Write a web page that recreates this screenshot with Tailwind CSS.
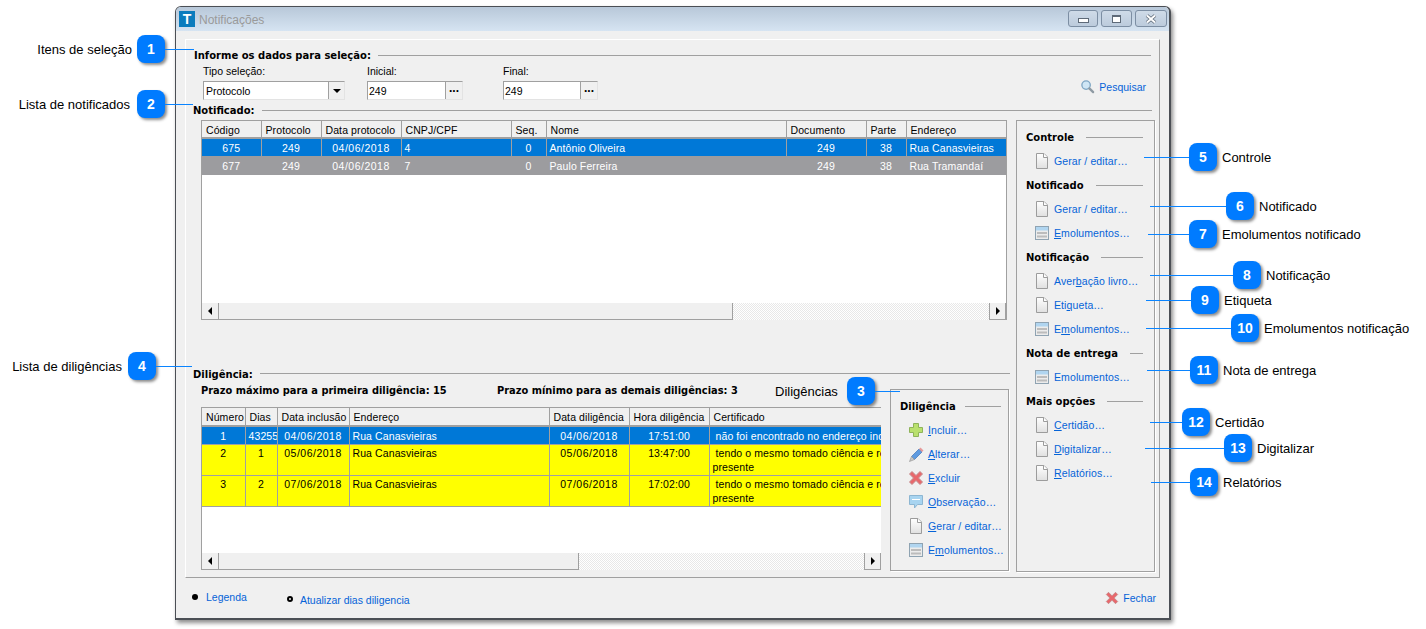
<!DOCTYPE html>
<html lang="pt-BR">
<head>
<meta charset="UTF-8">
<title>Notificações</title>
<script src="https://cdn.jsdelivr.net/npm/@tailwindcss/browser@4"></script>
</head>
<body class="relative w-[1426px] h-[629px] overflow-hidden bg-white pt-[6px] pl-[175px] font-['Liberation_Sans',sans-serif] text-[10.5px] leading-[14px] text-black">

<!-- shared icons -->
<svg class="absolute w-0 h-0">
  <defs><linearGradient id="g-doc" x1="0" y1="0" x2="0" y2="1"><stop offset="0" stop-color="#fff"/><stop offset="1" stop-color="#e0e0e0"/></linearGradient></defs>
  <symbol id="i-doc" viewBox="0 0 16 16"><path d="M2.5 .5h7.5l3.5 3.5v11.5h-11z" fill="url(#g-doc)" stroke="#9c9c9c"/><path d="M9.5 .5v4h4" fill="#fff" stroke="#9c9c9c"/></symbol>
  <symbol id="i-emol" viewBox="0 0 16 16"><rect x="1.5" y="1.5" width="13" height="13" fill="#ececec" stroke="#8fa3b2"/><rect x="2" y="2" width="12" height="3.5" fill="#b0d5f0"/><path d="M3 8h10M3 11.5h10" stroke="#bcbcbc" stroke-width="2"/></symbol>
  <symbol id="i-plus" viewBox="0 0 16 16"><path d="M5.5 1.5h5v4h4v5h-4v4h-5v-4h-4v-5h4z" fill="#b9e06e" stroke="#8fb35a"/></symbol>
  <symbol id="i-pencil" viewBox="0 0 16 16"><path d="M3.5 10.5l7.5-7.5 3 3-7.500 7.500z" fill="#5f9be0" stroke="#4d7fbd" stroke-width=".8"/><path d="M11 3l1.500-1.500 3 3-1.500 1.500z" fill="#e69a9a"/><path d="M3.500 10.500l3 3-5 2z" fill="#c9c9c9" stroke="#8d8d8d" stroke-width=".6"/></symbol>
  <symbol id="i-x" viewBox="0 0 16 16"><path d="M1.500 4l2.500-2.500 4 4 4-4 2.500 2.500-4 4 4 4-2.500 2.500-4-4-4 4-2.500-2.500 4-4z" fill="#e8686c" stroke="#c48a8c"/></symbol>
  <symbol id="i-bubble" viewBox="0 0 16 16"><path d="M1.500 1.500h13v9h-5l-3 3.500v-3.500h-5z" fill="#a8d4f0" stroke="#8db6d2"/><path d="M4 5.500h8" stroke="#fff"/></symbol>
  <symbol id="i-lens" viewBox="0 0 16 16"><circle cx="6.500" cy="6.500" r="4.500" fill="#cfe6f5" stroke="#7ea6c4" stroke-width="1.400"/><path d="M10 10l4 4" stroke="#8e9aa3" stroke-width="2.400" stroke-linecap="round"/></symbol>
</svg>

<!-- window -->
<div class="w-[996px] h-[614px] bg-[#f0f0f0] border-l border-t border-[#4b4f55] border-r-2 border-b-2 rounded-t-[6px] shadow-[2px_3px_4px_rgba(0,0,0,0.45)] flex flex-col">
  <div class="h-[24px] shrink-0 rounded-t-[5px] bg-linear-to-b from-[#b8c8d9] to-[#d6e4f2] flex items-center pl-[3px] pr-[2px]">
    <div class="w-[16px] h-[16px] bg-[#0b7cbd] text-white font-bold text-[14px] leading-[16px] text-center">T</div>
    <span class="ml-[4px] mt-[2px] text-[12px] text-[#9a9a9a]">Notificações</span>
    <div class="ml-auto flex gap-[3px] -mt-[1px]">
      <div class="w-[30px] h-[17px] border border-[#7c8ea3] rounded-[3px] bg-linear-to-b from-[#cfdbe8] to-[#bccbdc] flex items-center justify-center"><div class="w-[11px] h-[5px] mt-[4px] bg-white border border-[#5e6a78]"></div></div>
      <div class="w-[31px] h-[17px] border border-[#7c8ea3] rounded-[3px] bg-linear-to-b from-[#cfdbe8] to-[#bccbdc] flex items-center justify-center"><div class="w-[9px] h-[8px] border border-t-2 border-[#5e6a78] bg-white"></div></div>
      <div class="w-[32px] h-[17px] border border-[#7c8ea3] rounded-[3px] bg-linear-to-b from-[#cfdbe8] to-[#bccbdc] flex items-center justify-center">
        <svg class="w-[12px] h-[10px]" viewBox="0 0 12 10"><path d="M2 1.500l8 7M10 1.500l-8 7" stroke="#5e6a78" stroke-width="3.600"/><path d="M2 1.500l8 7M10 1.500l-8 7" stroke="#fff" stroke-width="2"/></svg>
      </div>
    </div>
  </div>

  <div class="ml-[9px] mt-[8px] w-[975px] h-[539px] shrink-0 border-t border-l border-white border-r border-b border-r-[#a0a0a0] border-b-[#a0a0a0]">
    <!-- selection -->
    <div class="mt-[8px] pl-[8px] pr-[8px] h-[14px] flex items-center gap-[7px] font-['DejaVu_Sans',sans-serif] font-bold text-[10px]">
      <span class="mt-[2px]">Informe os dados para seleção:</span><div class="flex-1 h-px bg-[#a0a0a0]"></div>
    </div>
    <div class="flex pl-[17px] pr-[13px] mt-[2px]">
      <div class="w-[142px]">
        <div class="h-[14px] mb-[3px]">Tipo seleção:</div>
        <div class="h-[19px] bg-white border border-[#a0a0a0] border-b-[#e3e3e3] border-r-[#e3e3e3] flex items-center pl-[2px]">
          <span>Protocolo</span>
          <div class="ml-auto w-[16px] h-[17px] bg-[#f0f0f0] border-l border-[#a0a0a0] flex items-center justify-center"><div class="border-x-[4px] border-x-transparent border-t-[4px] border-t-black"></div></div>
        </div>
      </div>
      <div class="w-[96px] ml-[22px]">
        <div class="h-[14px] mb-[3px]">Inicial:</div>
        <div class="h-[19px] bg-white border border-[#a0a0a0] border-b-[#e3e3e3] border-r-[#e3e3e3] flex items-center pl-[1px]">
          <span>249</span>
          <div class="ml-auto w-[17px] h-[17px] bg-[#f0f0f0] border-l border-[#a0a0a0] font-bold text-[12px] text-center leading-[12px]">...</div>
        </div>
      </div>
      <div class="w-[95px] ml-[40px]">
        <div class="h-[14px] mb-[3px]">Final:</div>
        <div class="h-[19px] bg-white border border-[#a0a0a0] border-b-[#e3e3e3] border-r-[#e3e3e3] flex items-center pl-[1px]">
          <span>249</span>
          <div class="ml-auto w-[17px] h-[17px] bg-[#f0f0f0] border-l border-[#a0a0a0] font-bold text-[12px] text-center leading-[12px]">...</div>
        </div>
      </div>
      <div class="ml-auto self-end mb-[6px] flex items-center gap-[4px] text-[#0563d8]">
        <svg class="w-[15px] h-[15px]"><use href="#i-lens"/></svg><span>Pesquisar</span>
      </div>
    </div>

    <!-- notificado -->
    <div class="mt-[3px] pl-[7px] pr-[7px] h-[14px] flex items-center gap-[7px] font-['DejaVu_Sans',sans-serif] font-bold text-[10px]">
      <span class="mt-[2px]">Notificado:</span><div class="flex-1 h-px bg-[#a0a0a0]"></div>
    </div>

    <div class="flex pl-[15px] mt-[3px]">
      <div class="w-[806px] shrink-0">
        <div class="h-[200px] border border-[#a0a0a0] border-b-0 bg-white flex flex-col overflow-hidden">
          <table class="table-fixed border-collapse w-[805px] tracking-[.1px] [&_td]:border-r [&_td]:border-[#a0a0a0] [&_td]:px-[3px] [&_td]:overflow-hidden [&_td]:whitespace-nowrap">
            <colgroup><col class="w-[59px]"><col class="w-[60px]"><col class="w-[80px]"><col class="w-[110px]"><col class="w-[35px]"><col class="w-[240px]"><col class="w-[80px]"><col class="w-[40px]"><col class="w-[101px]"></colgroup>
            <tbody>
              <tr class="h-[17px] bg-[#f0f0f0] border-b-2 border-[#a0a0a0] [&>td]:pl-[4px] [&>td]:pt-[2px]"><td>Código</td><td>Protocolo</td><td>Data protocolo</td><td>CNPJ/CPF</td><td>Seq.</td><td>Nome</td><td>Documento</td><td>Parte</td><td>Endereço</td></tr>
              <tr class="h-[18px] bg-[#0078d7] text-white"><td class="text-center">675</td><td class="text-center">249</td><td class="text-center tracking-[.5px]">04/06/2018</td><td>4</td><td class="text-center">0</td><td>Antônio Oliveira</td><td class="text-center">249</td><td class="text-center">38</td><td>Rua Canasvieiras</td></tr>
              <tr class="h-[19px] bg-[#9c9c9f] text-white [&>td]:border-[#9c9c9f]"><td class="text-center">677</td><td class="text-center">249</td><td class="text-center tracking-[.5px]">04/06/2018</td><td>7</td><td class="text-center">0</td><td>Paulo Ferreira</td><td class="text-center">249</td><td class="text-center">38</td><td>Rua Tramandaí</td></tr>
            </tbody>
          </table>
          <div class="mt-auto h-[17px] shrink-0 flex bg-[repeating-conic-gradient(#e8e8e8_0_25%,#fff_0_50%)] bg-[length:2px_2px]">
            <div class="w-[17px] bg-[#f0f0f0] border-r border-b border-[#a0a0a0] flex items-center justify-center"><div class="border-y-[4px] border-y-transparent border-r-[4px] border-r-black"></div></div>
            <div class="w-[514px] bg-[#f0f0f0] border-r border-b border-[#a0a0a0]"></div>
            <div class="ml-auto w-[17px] bg-[#f0f0f0] border-l border-b border-r border-[#a0a0a0] flex items-center justify-center"><div class="border-y-[4px] border-y-transparent border-l-[4px] border-l-black"></div></div>
          </div>
        </div>

        <!-- diligencia -->
        <div class="mt-[46px] -ml-[8px] -mr-[3px] h-[14px] flex items-center gap-[7px] font-['DejaVu_Sans',sans-serif] font-bold text-[10px]">
          <span class="mt-[4px]">Diligência:</span><div class="flex-1 h-px bg-[#a0a0a0]"></div>
        </div>
        <div class="flex mt-[3px]">
          <div class="w-[680px] shrink-0">
            <div class="flex h-[14px] pt-[1px] font-['DejaVu_Sans',sans-serif] font-bold text-[9.85px]">
              <span class="w-[296px]">Prazo máximo para a primeira diligência: 15</span>
              <span>Prazo mínimo para as demais diligências: 3</span>
            </div>
            <div class="mt-[10px] h-[163px] border-t border-l border-[#a0a0a0] bg-white flex flex-col overflow-hidden">
              <table class="table-fixed border-collapse w-[899px] tracking-[.1px] [&_td]:border-r [&_td]:border-[#a0a0a0] [&_td]:px-[3px] [&_td]:overflow-hidden [&_td]:whitespace-nowrap [&_td]:align-top">
                <colgroup><col class="w-[43px]"><col class="w-[32px]"><col class="w-[72px]"><col class="w-[200px]"><col class="w-[80px]"><col class="w-[80px]"><col class="w-[392px]"></colgroup>
                <tbody>
                  <tr class="h-[18px] bg-[#f0f0f0] border-b-2 border-[#a0a0a0] [&>td]:pl-[4px] [&>td]:pt-[2px]"><td>Número</td><td>Dias</td><td>Data inclusão</td><td>Endereço</td><td>Data diligência</td><td>Hora diligência</td><td>Certificado</td></tr>
                  <tr class="h-[18px] bg-[#0078d7] text-white [&>td]:pt-[2px]"><td class="text-center">1</td><td class="!pr-0 !pl-[3px]">43255</td><td class="text-center tracking-[.5px]">04/06/2018</td><td>Rua Canasvieiras</td><td class="text-center tracking-[.5px]">04/06/2018</td><td class="text-center">17:51:00</td><td>&nbsp;não foi encontrado no endereço indicado</td></tr>
                  <tr class="h-[31px] bg-[#ffff00] border-t border-[#a0a0a0] [&>td]:pt-[1px]"><td class="text-center">2</td><td class="text-center">1</td><td class="text-center tracking-[.5px]">05/06/2018</td><td>Rua Canasvieiras</td><td class="text-center tracking-[.5px]">05/06/2018</td><td class="text-center">13:47:00</td><td>&nbsp;tendo o mesmo tomado ciência e recebido<br>presente</td></tr>
                  <tr class="h-[31px] bg-[#ffff00] border-y border-[#a0a0a0] [&>td]:pt-[1px]"><td class="text-center">3</td><td class="text-center">2</td><td class="text-center tracking-[.5px]">07/06/2018</td><td>Rua Canasvieiras</td><td class="text-center tracking-[.5px]">07/06/2018</td><td class="text-center">17:02:00</td><td>&nbsp;tendo o mesmo tomado ciência e recebido<br>presente</td></tr>
                </tbody>
              </table>
              <div class="mt-auto h-[17px] shrink-0 flex bg-[repeating-conic-gradient(#e8e8e8_0_25%,#fff_0_50%)] bg-[length:2px_2px]">
                <div class="w-[17px] bg-[#f0f0f0] border-r border-b border-[#a0a0a0] flex items-center justify-center"><div class="border-y-[4px] border-y-transparent border-r-[4px] border-r-black"></div></div>
                <div class="w-[360px] bg-[#f0f0f0] border-r border-b border-[#a0a0a0]"></div>
                <div class="ml-auto w-[17px] bg-[#f0f0f0] border-l border-b border-r border-[#a0a0a0] flex items-center justify-center"><div class="border-y-[4px] border-y-transparent border-l-[4px] border-l-black"></div></div>
              </div>
            </div>
          </div>
          <div class="ml-[9px] mt-[6px] w-[119px] h-[182px] shrink-0 border border-[#a0a0a0] shadow-[1px_1px_0_#fff] pt-[4px] text-[#0563d8] tracking-[.1px]">
            <div class="h-[24px] pl-[9px] pr-[7px] flex items-center gap-[9px] font-['DejaVu_Sans',sans-serif] font-bold text-[10px] text-black tracking-normal"><span class="mt-[2px]">Diligência</span><div class="flex-1 h-px bg-[#a0a0a0]"></div></div>
            <div class="h-[24px] pl-[17px] flex items-center gap-[4px]"><svg class="w-[16px] h-[16px]"><use href="#i-plus"/></svg><span><u>I</u>ncluir…</span></div>
            <div class="h-[24px] pl-[17px] flex items-center gap-[4px]"><svg class="w-[16px] h-[16px]"><use href="#i-pencil"/></svg><span><u>A</u>lterar…</span></div>
            <div class="h-[24px] pl-[17px] flex items-center gap-[4px]"><svg class="w-[16px] h-[16px]"><use href="#i-x"/></svg><span><u>E</u>xcluir</span></div>
            <div class="h-[24px] pl-[17px] flex items-center gap-[4px]"><svg class="w-[16px] h-[16px]"><use href="#i-bubble"/></svg><span><u>O</u>bservação…</span></div>
            <div class="h-[24px] pl-[17px] flex items-center gap-[4px]"><svg class="w-[16px] h-[16px]"><use href="#i-doc"/></svg><span><u>G</u>erar / editar…</span></div>
            <div class="h-[24px] pl-[17px] flex items-center gap-[4px]"><svg class="w-[16px] h-[16px]"><use href="#i-emol"/></svg><span>E<u>m</u>olumentos…</span></div>
          </div>
        </div>
      </div>

      <!-- right options -->
      <div class="ml-[9px] w-[139px] h-[452px] shrink-0 border border-[#a0a0a0] shadow-[1px_1px_0_#fff] pt-[4px] text-[#0563d8] tracking-[.1px]">
        <div class="h-[24px] pl-[9px] pr-[11px] flex items-center gap-[12px] font-['DejaVu_Sans',sans-serif] font-bold text-[10px] text-black tracking-normal"><span class="mt-[2px]">Controle</span><div class="flex-1 h-px bg-[#a0a0a0]"></div></div>
        <div class="h-[24px] pl-[17px] flex items-center gap-[4px]"><svg class="w-[16px] h-[16px]"><use href="#i-doc"/></svg><span>Gerar / editar…</span></div>
        <div class="h-[24px] pl-[9px] pr-[11px] flex items-center gap-[12px] font-['DejaVu_Sans',sans-serif] font-bold text-[10px] text-black tracking-normal"><span class="mt-[2px]">Notificado</span><div class="flex-1 h-px bg-[#a0a0a0]"></div></div>
        <div class="h-[24px] pl-[17px] flex items-center gap-[4px]"><svg class="w-[16px] h-[16px]"><use href="#i-doc"/></svg><span>Gerar / editar…</span></div>
        <div class="h-[24px] pl-[17px] flex items-center gap-[4px]"><svg class="w-[16px] h-[16px]"><use href="#i-emol"/></svg><span><u>E</u>molumentos…</span></div>
        <div class="h-[24px] pl-[9px] pr-[11px] flex items-center gap-[12px] font-['DejaVu_Sans',sans-serif] font-bold text-[10px] text-black tracking-normal"><span class="mt-[2px]">Notificação</span><div class="flex-1 h-px bg-[#a0a0a0]"></div></div>
        <div class="h-[24px] pl-[17px] flex items-center gap-[4px]"><svg class="w-[16px] h-[16px]"><use href="#i-doc"/></svg><span>Aver<u>b</u>ação livro…</span></div>
        <div class="h-[24px] pl-[17px] flex items-center gap-[4px]"><svg class="w-[16px] h-[16px]"><use href="#i-doc"/></svg><span>Eti<u>q</u>ueta…</span></div>
        <div class="h-[24px] pl-[17px] flex items-center gap-[4px]"><svg class="w-[16px] h-[16px]"><use href="#i-emol"/></svg><span>E<u>m</u>olumentos…</span></div>
        <div class="h-[24px] pl-[9px] pr-[11px] flex items-center gap-[12px] font-['DejaVu_Sans',sans-serif] font-bold text-[10px] text-black tracking-normal"><span class="mt-[2px]">Nota de entrega</span><div class="flex-1 h-px bg-[#a0a0a0]"></div></div>
        <div class="h-[24px] pl-[17px] flex items-center gap-[4px]"><svg class="w-[16px] h-[16px]"><use href="#i-emol"/></svg><span>Emolumentos…</span></div>
        <div class="h-[24px] pl-[9px] pr-[11px] flex items-center gap-[12px] font-['DejaVu_Sans',sans-serif] font-bold text-[10px] text-black tracking-normal"><span class="mt-[2px]">Mais opções</span><div class="flex-1 h-px bg-[#a0a0a0]"></div></div>
        <div class="h-[24px] pl-[17px] flex items-center gap-[4px]"><svg class="w-[16px] h-[16px]"><use href="#i-doc"/></svg><span><u>C</u>ertidão…</span></div>
        <div class="h-[24px] pl-[17px] flex items-center gap-[4px]"><svg class="w-[16px] h-[16px]"><use href="#i-doc"/></svg><span><u>D</u>igitalizar…</span></div>
        <div class="h-[24px] pl-[17px] flex items-center gap-[4px]"><svg class="w-[16px] h-[16px]"><use href="#i-doc"/></svg><span><u>R</u>elatórios…</span></div>
      </div>
    </div>
  </div>

  <!-- footer -->
  <div class="flex pl-[16px] pr-[13px] mt-[12px] text-[#0563d8]">
    <div class="w-[6px] h-[6px] mt-[4px] rounded-full bg-black"></div>
    <span class="ml-[8px]">Legenda</span>
    <div class="ml-[40px] mt-[6px] w-[6px] h-[6px] rounded-full border-2 border-black"></div>
    <span class="ml-[7px] mt-[3px]">Atualizar dias diligencia</span>
    <div class="ml-auto flex items-center gap-[4px] h-[14px] mt-[1px]"><svg class="w-[14px] h-[14px]"><use href="#i-x"/></svg><span>Fechar</span></div>
  </div>
</div>

<!-- callouts over the screenshot -->
<div class="absolute left-[37px] top-[35px] flex items-center h-[28px] text-[13px]"><span class="mr-[5px] mt-[2px] w-[95px] text-right">Itens de seleção</span><div class="w-[28px] h-[28px] rounded-[8px] bg-[#007bff] text-white font-bold text-[14px] flex items-center justify-center shadow-[2px_2px_3px_rgba(0,0,0,0.45)]">1</div><div class="w-[29px] h-px bg-[#0a84ff]"></div></div>
<div class="absolute left-[18px] top-[90px] flex items-center h-[28px] text-[13px]"><span class="mr-[7px] mt-[2px] w-[112px] text-right">Lista de notificados</span><div class="w-[28px] h-[28px] rounded-[8px] bg-[#007bff] text-white font-bold text-[14px] flex items-center justify-center shadow-[2px_2px_3px_rgba(0,0,0,0.45)]">2</div><div class="w-[28px] h-px bg-[#0a84ff]"></div></div>
<div class="absolute left-[12px] top-[352px] flex items-center h-[28px] text-[13px]"><span class="mr-[6px] mt-[2px] w-[110px] text-right">Lista de diligências</span><div class="w-[28px] h-[28px] rounded-[8px] bg-[#007bff] text-white font-bold text-[14px] flex items-center justify-center shadow-[2px_2px_3px_rgba(0,0,0,0.45)]">4</div><div class="w-[36px] h-px bg-[#0a84ff]"></div></div>
<div class="absolute left-[775px] top-[377px] flex items-center h-[28px] text-[13px]"><span class="w-[72px] mt-[2px]">Diligências</span><div class="w-[28px] h-[28px] rounded-[8px] bg-[#007bff] text-white font-bold text-[14px] flex items-center justify-center shadow-[2px_2px_3px_rgba(0,0,0,0.45)]">3</div><div class="w-[25px] h-px bg-[#0a84ff]"></div></div>

<div class="absolute left-[1144px] top-[143px] flex items-center h-[28px] text-[13px]"><div class="w-[45px] h-px bg-[#0a84ff]"></div><div class="w-[28px] h-[28px] rounded-[8px] bg-[#007bff] text-white font-bold text-[14px] flex items-center justify-center shadow-[2px_2px_3px_rgba(0,0,0,0.45)]">5</div><span class="ml-[5px] mt-[2px]">Controle</span></div>
<div class="absolute left-[1150px] top-[192px] flex items-center h-[28px] text-[13px]"><div class="w-[76px] h-px bg-[#0a84ff]"></div><div class="w-[28px] h-[28px] rounded-[8px] bg-[#007bff] text-white font-bold text-[14px] flex items-center justify-center shadow-[2px_2px_3px_rgba(0,0,0,0.45)]">6</div><span class="ml-[5px] mt-[2px]">Notificado</span></div>
<div class="absolute left-[1148px] top-[220px] flex items-center h-[28px] text-[13px]"><div class="w-[41px] h-px bg-[#0a84ff]"></div><div class="w-[28px] h-[28px] rounded-[8px] bg-[#007bff] text-white font-bold text-[14px] flex items-center justify-center shadow-[2px_2px_3px_rgba(0,0,0,0.45)]">7</div><span class="ml-[5px] mt-[2px]">Emolumentos notificado</span></div>
<div class="absolute left-[1150px] top-[261px] flex items-center h-[28px] text-[13px]"><div class="w-[83px] h-px bg-[#0a84ff]"></div><div class="w-[28px] h-[28px] rounded-[8px] bg-[#007bff] text-white font-bold text-[14px] flex items-center justify-center shadow-[2px_2px_3px_rgba(0,0,0,0.45)]">8</div><span class="ml-[5px] mt-[2px]">Notificação</span></div>
<div class="absolute left-[1146px] top-[286px] flex items-center h-[28px] text-[13px]"><div class="w-[45px] h-px bg-[#0a84ff]"></div><div class="w-[28px] h-[28px] rounded-[8px] bg-[#007bff] text-white font-bold text-[14px] flex items-center justify-center shadow-[2px_2px_3px_rgba(0,0,0,0.45)]">9</div><span class="ml-[5px] mt-[2px]">Etiqueta</span></div>
<div class="absolute left-[1146px] top-[314px] flex items-center h-[28px] text-[13px]"><div class="w-[85px] h-px bg-[#0a84ff]"></div><div class="w-[28px] h-[28px] rounded-[8px] bg-[#007bff] text-white font-bold text-[14px] flex items-center justify-center shadow-[2px_2px_3px_rgba(0,0,0,0.45)]">10</div><span class="ml-[5px] mt-[2px]">Emolumentos notificação</span></div>
<div class="absolute left-[1147px] top-[356px] flex items-center h-[28px] text-[13px]"><div class="w-[43px] h-px bg-[#0a84ff]"></div><div class="w-[28px] h-[28px] rounded-[8px] bg-[#007bff] text-white font-bold text-[14px] flex items-center justify-center shadow-[2px_2px_3px_rgba(0,0,0,0.45)]">11</div><span class="ml-[5px] mt-[2px]">Nota de entrega</span></div>
<div class="absolute left-[1150px] top-[408px] flex items-center h-[28px] text-[13px]"><div class="w-[32px] h-px bg-[#0a84ff]"></div><div class="w-[28px] h-[28px] rounded-[8px] bg-[#007bff] text-white font-bold text-[14px] flex items-center justify-center shadow-[2px_2px_3px_rgba(0,0,0,0.45)]">12</div><span class="ml-[5px] mt-[2px]">Certidão</span></div>
<div class="absolute left-[1145px] top-[434px] flex items-center h-[28px] text-[13px]"><div class="w-[79px] h-px bg-[#0a84ff]"></div><div class="w-[28px] h-[28px] rounded-[8px] bg-[#007bff] text-white font-bold text-[14px] flex items-center justify-center shadow-[2px_2px_3px_rgba(0,0,0,0.45)]">13</div><span class="ml-[5px] mt-[2px]">Digitalizar</span></div>
<div class="absolute left-[1151px] top-[468px] flex items-center h-[28px] text-[13px]"><div class="w-[39px] h-px bg-[#0a84ff]"></div><div class="w-[28px] h-[28px] rounded-[8px] bg-[#007bff] text-white font-bold text-[14px] flex items-center justify-center shadow-[2px_2px_3px_rgba(0,0,0,0.45)]">14</div><span class="ml-[5px] mt-[2px]">Relatórios</span></div>
</body>
</html>
